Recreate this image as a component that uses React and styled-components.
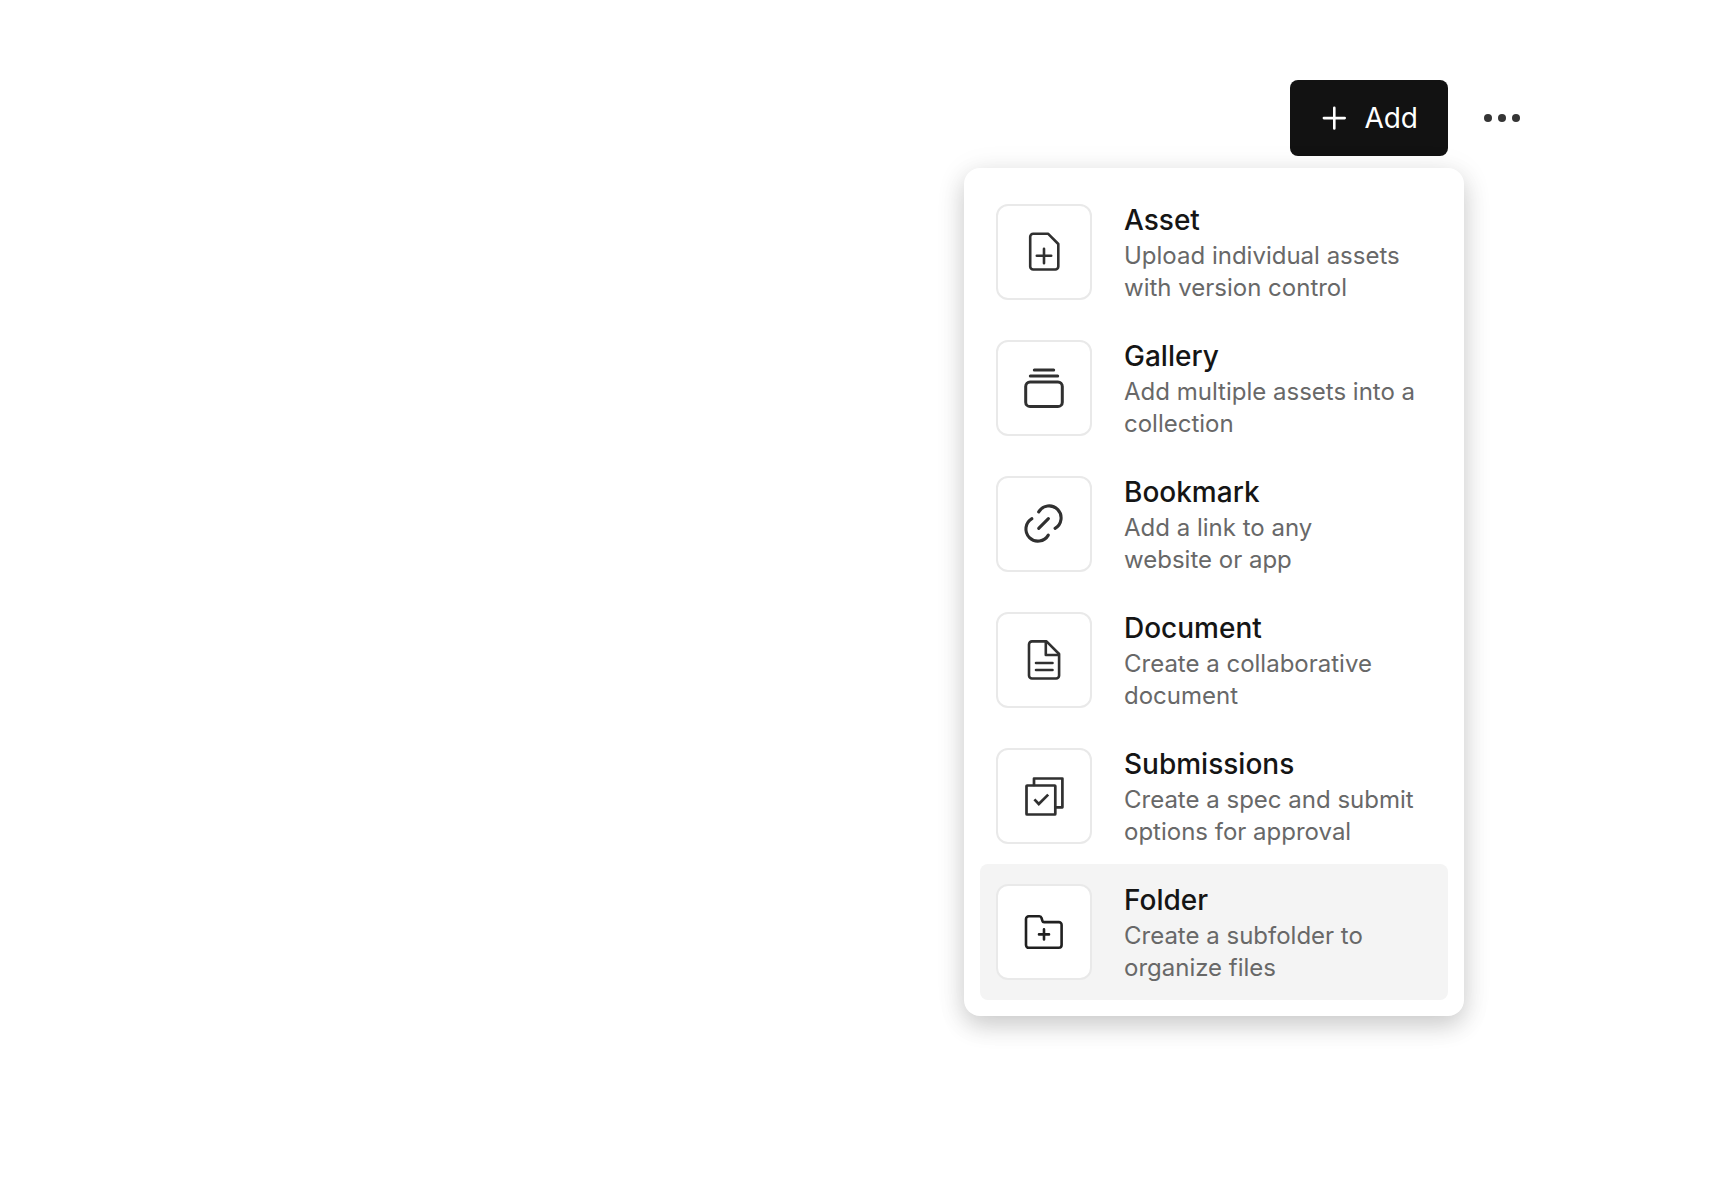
import React from "react";
import styled, { createGlobalStyle } from "styled-components";

const GlobalStyle = createGlobalStyle`
  *, *::before, *::after { box-sizing: border-box; }
  body {
    margin: 0;
    background: #fff;
    color: #151515;
    font-family: Inter, "Liberation Sans", sans-serif;
  }
  button { font-family: inherit; color: inherit; cursor: pointer; }
`;

const Page = styled.main`
  min-height: 100vh;
  padding: 80px 186px 160px 32px;
`;

const Toolbar = styled.header`
  display: flex;
  justify-content: flex-end;
  align-items: center;
  gap: 16px;
`;

const Dropdown = styled.div`
  position: relative;
`;

const AddButton = styled.button`
  display: flex;
  align-items: center;
  gap: 18px;
  height: 76px;
  padding: 0 30px 0 32px;
  border: 0;
  border-radius: 8px;
  background: #121212;
  color: #fff;
  font-size: 28px;
  line-height: 40px;
  font-weight: 400;
`;

const MoreButton = styled.button`
  display: flex;
  align-items: center;
  justify-content: center;
  width: 76px;
  height: 76px;
  padding: 0;
  border: 0;
  border-radius: 8px;
  background: transparent;
`;

const Menu = styled.ul`
  position: absolute;
  top: 100%;
  right: -16px;
  width: 500px;
  margin: 12px 0 0;
  padding: 16px;
  list-style: none;
  border-radius: 16px;
  background: #fff;
  box-shadow: 0 10px 24px rgba(0, 0, 0, 0.16), 0 4px 32px rgba(0, 0, 0, 0.08);
`;

const MenuItem = styled.button`
  display: flex;
  align-items: center;
  gap: 32px;
  width: 100%;
  padding: 16px;
  border: 0;
  border-radius: 8px;
  background: ${(p) => (p.$active ? "#f4f4f4" : "transparent")};
  text-align: left;
`;

const IconTile = styled.span`
  display: flex;
  flex: none;
  align-items: center;
  justify-content: center;
  width: 96px;
  height: 96px;
  border: 2px solid #e9e9e9;
  border-radius: 12px;
  background: #fff;
  color: ${(p) => (p.$active ? "#202020" : "#303030")};
`;

const ItemText = styled.span`
  display: flex;
  flex: 1;
  flex-direction: column;
  min-width: 0;
`;

const Title = styled.span`
  font-size: 28px;
  line-height: 40px;
  font-weight: 500;
  color: #151515;
`;

const Description = styled.span`
  font-size: 24px;
  line-height: 32px;
  font-weight: 400;
  color: #686868;
  white-space: pre-line;
`;

const Glyph = ({ width = 2.6, children }) => (
  <svg
    width="48"
    height="48"
    viewBox="0 0 48 48"
    fill="none"
    stroke="currentColor"
    strokeWidth={width}
    strokeLinecap="round"
    strokeLinejoin="round"
    aria-hidden="true"
  >
    {children}
  </svg>
);

const AssetIcon = () => (
  <Glyph>
    <path d="M13.2 5.7H28L38.3 16V38.5a3 3 0 0 1-3 3H13.2a3 3 0 0 1-3-3V8.7a3 3 0 0 1 3-3Z" />
    <path d="M24 20.8v14.4M16.8 27.7h14.4" />
  </Glyph>
);

const GalleryIcon = () => (
  <Glyph width={3}>
    <path d="M14.3 6h19.4M10.3 12h27.4" />
    <rect x="5.7" y="18" width="36.6" height="24.6" rx="4.4" />
  </Glyph>
);

const BookmarkIcon = () => (
  <Glyph width={3.1}>
    <path d="M18.7 11.9A12 12 0 1 1 35.1 28.3" />
    <path d="M28.3 35.1A12 12 0 1 1 11.9 18.7" />
    <path d="M18.7 28.4l9.7-9.8" />
  </Glyph>
);

const DocumentIcon = () => (
  <Glyph>
    <path d="M12 5.4H26.5L39.1 18V39.5a3 3 0 0 1-3 3H12a3 3 0 0 1-3-3V8.400a3 3 0 0 1 3-3Z" />
    <path d="M25.8 6v13H38.5M16 27h16.5M16 34h16.5" />
  </Glyph>
);

const SubmissionsIcon = () => (
  <Glyph width={2.7}>
    <rect x="6.5" y="13.5" width="28.8" height="29" rx="0.6" />
    <path d="M14 13V6.500h28.400v28.800H36" />
    <path d="M14.4 27.4l4.400 4.600 9.400-9.400" strokeLinecap="butt" strokeLinejoin="miter" />
  </Glyph>
);

const FolderIcon = () => (
  <Glyph>
    <path d="M8.8 8.3H19.4c1.3 0 1.8.5 2.1 1.7l1 3.1c.2.8.6 1 1.5 1H38.8a2.8 2.8 0 0 1 2.8 2.8V37a2.8 2.8 0 0 1-2.8 2.8H8.8A2.8 2.8 0 0 1 6 37V11.1a2.8 2.8 0 0 1 2.8-2.8Z" />
    <path d="M24 21.4v10M19 26.4h10" />
  </Glyph>
);

const PlusIcon = () => (
  <svg width="24" height="24" viewBox="0 0 24 24" fill="none" stroke="currentColor" strokeWidth="2.6" strokeLinecap="round" aria-hidden="true">
    <path d="M12.3 1.7v20.8M1.9 12.1h20.8" />
  </svg>
);

const DotsIcon = () => (
  <svg width="36" height="8" viewBox="0 0 36 8" fill="#353535" aria-hidden="true">
    <circle cx="4" cy="4" r="4" />
    <circle cx="18" cy="4" r="4" />
    <circle cx="32" cy="4" r="4" />
  </svg>
);

const items = [
  { title: "Asset", text: "Upload individual assets with version control", Icon: AssetIcon },
  { title: "Gallery", text: "Add multiple assets into a collection", Icon: GalleryIcon },
  { title: "Bookmark", text: "Add a link to any\nwebsite or app", Icon: BookmarkIcon },
  { title: "Document", text: "Create a collaborative document", Icon: DocumentIcon },
  { title: "Submissions", text: "Create a spec and submit options for approval", Icon: SubmissionsIcon },
  { title: "Folder", text: "Create a subfolder to organize files", Icon: FolderIcon, active: true },
];

export default function App() {
  return (
    <>
      <GlobalStyle />
      <Page>
        <Toolbar>
          <Dropdown>
            <AddButton type="button" aria-haspopup="true" aria-expanded="true">
              <PlusIcon />
              Add
            </AddButton>
            <Menu>
              {items.map(({ title, text, Icon, active }) => (
                <li key={title}>
                  <MenuItem type="button" $active={active}>
                    <IconTile $active={active}>
                      <Icon />
                    </IconTile>
                    <ItemText>
                      <Title>{title}</Title>
                      <Description>{text}</Description>
                    </ItemText>
                  </MenuItem>
                </li>
              ))}
            </Menu>
          </Dropdown>
          <MoreButton type="button" aria-label="More options">
            <DotsIcon />
          </MoreButton>
        </Toolbar>
      </Page>
    </>
  );
}
